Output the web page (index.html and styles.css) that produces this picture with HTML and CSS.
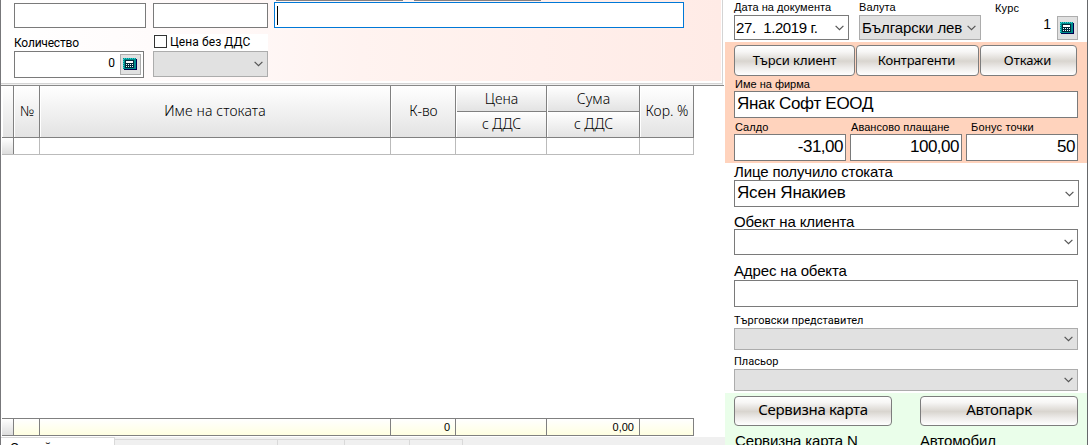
FILE: index.html
```html
<!DOCTYPE html>
<html lang="bg">
<head>
<meta charset="utf-8">
<title>Продажба</title>
<link rel="stylesheet" href="styles.css">
</head>
<body>
<svg class="defs" width="0" height="0">
  <symbol id="calc" viewBox="0 0 14 12" shape-rendering="crispEdges">
    <path fill="#000050" d="M1 1h13v11H1z"/>
    <path fill="#008c8c" d="M0 0h13v11H0z"/>
    <path fill="#30d8d8" d="M1 0h1v1H1zM3 0h1v1H3zM5 0h1v1H5zM7 0h1v1H7zM9 0h1v1H9zM11 0h1v1h-1zM0 1h1v1H0zM0 3h1v1H0zM0 5h1v1H0zM0 7h1v1H0zM0 9h1v1H0z"/>
    <path fill="#002838" d="M2 2h9v8H2z"/>
    <path fill="#fff" d="M3 3h7v2H3z"/>
    <path fill="#f0ffff" d="M3 6h1v1H3zM5 6h1v1H5zM7 6h1v1H7zM9 6h1v1H9zM3 8h1v1H3zM5 8h1v1H5zM7 8h1v1H7zM9 8h1v1H9z"/>
  </symbol>
  <symbol id="chev" viewBox="0 0 9 6"><path d="M.6.8l3.9 3.9L8.400.8" fill="none" stroke="#555" stroke-width="1.2"/></symbol>
</svg>
<div class="app">
  <main class="left">
    <section class="entry">
      <div class="cut"><i></i><i></i></div>
      <div class="row1">
        <div class="field f1"></div>
        <div class="field f2"></div>
        <div class="field active"><span class="caret"></span></div>
      </div>
      <div class="row2">
        <div class="qty">
          <label class="sys t-qty">Количество</label>
          <div class="field qfield"><span class="sys">0</span><button class="calc"><svg width="14" height="12"><use href="#calc"/></svg></button></div>
        </div>
        <div class="vat">
          <label class="check"><span class="box"></span><span class="sys t-vat">Цена без ДДС</span></label>
          <div class="field off vsel"><svg width="9" height="6"><use href="#chev"/></svg></div>
        </div>
      </div>
    </section>
    <section class="grid">
      <div class="line head">
        <div></div><div>№</div><div><span class="t-item">Име на стоката</span></div><div><span class="t-kvo">К-во</span></div>
        <div class="split"><span>Цена</span><span>с ДДС</span></div>
        <div class="split"><span>Сума</span><span>с ДДС</span></div>
        <div><span class="t-kor">Кор. %</span></div>
      </div>
      <div class="line blank"><div></div><div></div><div></div><div></div><div></div><div></div><div></div></div>
      <div class="space"></div>
      <div class="line foot"><div></div><div></div><div></div><div>0</div><div></div><div>0,00</div><div></div></div>
    </section>
    <nav class="tabs"><span class="on">Случай</span><span class="w2"></span><span class="w3"></span><span class="w4"></span><span class="w5"></span></nav>
  </main>
  <aside class="right">
    <section class="doc">
      <div class="date"><label class="s t-date">Дата на документа</label><div class="field"><span class="t-dv">27.&nbsp; 1.2019 г.</span><svg width="9" height="6"><use href="#chev"/></svg></div></div>
      <div class="cur"><label class="s t-val">Валута</label><div class="field off"><span class="t-bg">Български лев</span><svg width="9" height="6"><use href="#chev"/></svg></div></div>
      <div class="rate"><label class="s t-rate">Курс</label><div class="ratev"><span>1</span><button class="calc tall"><svg width="14" height="12"><use href="#calc"/></svg></button></div></div>
    </section>
    <section class="client">
      <div class="btns"><button class="btn"><span class="t-b1">Търси клиент</span></button><button class="btn"><span class="t-b2">Контрагенти</span></button><button class="btn"><span class="t-b3">Откажи</span></button></div>
      <label class="s t-firm">Име на фирма</label>
      <div class="field big"><span class="t-yan">Янак Софт ЕООД</span></div>
      <div class="sums">
        <div><label class="s">Салдо</label><div class="field big num">-31,00</div></div>
        <div><label class="s t-av">Авансово плащане</label><div class="field big num">100,00</div></div>
        <div><label class="s t-bon">Бонус точки</label><div class="field big num">50</div></div>
      </div>
    </section>
    <section class="place">
      <label class="m t-lice">Лице получило стоката</label>
      <div class="field big person"><span class="t-yas">Ясен Янакиев</span><svg width="9" height="6"><use href="#chev"/></svg></div>
      <label class="m m2 t-ob">Обект на клиента</label>
      <div class="field obj"><svg width="9" height="6"><use href="#chev"/></svg></div>
      <label class="m m3 t-adr">Адрес на обекта</label>
      <div class="field big"></div>
      <label class="sys l4 t-rep">Търговски представител</label>
      <div class="field off thin"><svg width="9" height="6"><use href="#chev"/></svg></div>
      <label class="sys l5 t-pl">Пласьор</label>
      <div class="field off thin"><svg width="9" height="6"><use href="#chev"/></svg></div>
    </section>
    <section class="service">
      <div><button class="btn wide"><span class="t-sk">Сервизна карта</span></button><label class="m t-skn">Сервизна карта N</label></div>
      <div><button class="btn wide"><span class="t-ap">Автопарк</span></button><label class="m t-am">Автомобил</label></div>
    </section>
  </aside>
</div>
</body>
</html>
```
FILE: styles.css
```css
* { box-sizing: border-box; }
body { margin: 0; width: 1088px; height: 445px; overflow: hidden; background: #fff; color: #000; font-family: "Liberation Sans", Arial, sans-serif; }
.defs { display: block; position: absolute; }
.app { display: flex; width: 1088px; height: 445px; overflow: hidden; border-left: 1px solid #77777a; border-right: 1px solid #66686b; }
label, span { white-space: nowrap; }
label { display: block; }
svg { display: block; flex: none; }
button { font: inherit; color: inherit; padding: 0; margin: 0; }
.field { border: 1px solid #7a7a7a; background: #fff; display: flex; align-items: center; }
.field.off { background: #e1e1e1; border-color: #acacac; }
.field > svg { margin-left: auto; }
.s { font-size: 11px; line-height: 13px; letter-spacing: .05px; }
.sys { font-family: Roboto, sans-serif; font-size: 12px; line-height: 14px; }
.m { font-size: 15px; line-height: 17px; letter-spacing: -.14px; }
.t-qty { letter-spacing: -.2px; }
.t-vat { letter-spacing: .08px; }
.t-firm { letter-spacing: 0; }
.t-bon { letter-spacing: .18px; }
.t-rate { letter-spacing: .2px; }

.left { width: 724px; display: flex; flex-direction: column; }
.entry { height: 85px; width: 722px; border-right: 1px solid #d4d4d4; border-bottom: 1px solid #f0f0f0; background: linear-gradient(90deg, #fff 0, #fffafa 190px, #fff3f0 360px, #ffebe6 720px) 0 0 / 720px 81px no-repeat, linear-gradient(#d4d4d4, #d4d4d4) 0 83px / 100% 1px no-repeat; padding-left: 13px; }
.cut { height: 2px; display: flex; gap: 11px; padding-left: 262px; }
.cut i { height: 1px; width: 127px; background: #858080; }
.row1 { display: flex; align-items: flex-start; height: 26px; }
.row1 .field { height: 25px; margin-top: 1px; }
.row1 .f1 { width: 132px; margin-right: 7px; }
.row1 .f2 { width: 115px; margin-right: 6px; }
.row1 .active { width: 410px; height: 26px; margin-top: 0; border-color: #0078d7; }
.caret { width: 1px; height: 19px; background: #000; margin-left: 2px; }
.row2 { display: flex; gap: 9px; }
.qty { width: 130px; padding-top: 8px; }
.qty label { height: 15px; }
.qfield { height: 27px; padding-right: 2px; justify-content: flex-end; gap: 5px; }
.qfield .sys { margin-top: -3px; }
.calc { width: 21px; height: 21px; border: 1px solid #adadad; background: #e1e1e1; display: flex; align-items: center; justify-content: center; }
.calc svg { margin: -1px 1px 0 0; }
.vat { width: 115px; padding-top: 6px; }
.check { height: 17px; background: #fff; display: flex; gap: 3px; padding: 1px 0 0 1px; }
.box { width: 13px; height: 13px; border: 1px solid #333; background: #fff; }
.vsel { height: 26px; padding-right: 4px; }

.grid { height: 351px; width: 723px; padding-left: 1px; border-top: 1px solid #888; display: flex; flex-direction: column; }
.line { display: grid; grid-template-columns: 12px 26px 351px 65px 91px 93px 54px; width: 692px; flex: none; }
.line > div { border-right: 1px solid #808080; display: flex; align-items: center; justify-content: center; }
.head { height: 52px; border-bottom: 1px solid #808080; font: 300 14px/16px "Noto Sans", sans-serif; }
.head > div { background: linear-gradient(#fff, #e3e3e3); border-left: 1px solid #fff; }
.t-item { letter-spacing: .12px; margin-left: -1px; }
.head > div:not(.split) { padding-bottom: 1px; }
.head .split { flex-direction: column; background: none; }
.split span { display: flex; align-items: center; justify-content: center; width: 100%; height: 26px; background: linear-gradient(#fff, #e3e3e3); }
.split span:first-child { height: 26px; border-bottom: 1px solid #808080; }
.split span:last-child { height: 25px; padding-bottom: 1px; letter-spacing: -.2px; }
.blank { height: 17px; border-bottom: 1px solid #bbb; }
.blank > div { border-right-color: #bbb; }
.blank > div:first-child, .foot > div:first-child { background: linear-gradient(#fff, #ddd); border-right-color: #808080; }
.space { flex: 1; }
.foot { height: 18px; border-top: 1px solid #808080; border-bottom: 1px solid #808080; font-size: 11px; }
.foot > div { background: linear-gradient(#fff, #ffffe1); justify-content: flex-end; padding-right: 5px; }
.tabs { margin-top: 1px; height: 8px; background: #f0f0f0; display: flex; align-items: flex-end; }
.tabs span { height: 6px; border-top: 1px solid #d9d9d9; border-right: 1px solid #d9d9d9; }
.tabs .on { width: 114px; height: 8px; background: #fff; font-size: 12px; line-height: 14px; padding: 3px 0 0 9px; overflow: hidden; }
.tabs .w2 { width: 163px; } .tabs .w3 { width: 67px; } .tabs .w4 { width: 65px; } .tabs .w5 { width: 53px; }

.right { width: 362px; display: flex; flex-direction: column; }
.doc { height: 42px; padding: 1px 0 0 9px; display: flex; }
.doc label { height: 14px; }
.doc .field { height: 25px; font-size: 15px; }
.date { width: 115px; margin-right: 10px; }
.date .field { padding: 0 4px 0 1px; }
.t-dv { letter-spacing: -.4px; }
.t-bg { letter-spacing: -.1px; }
.cur { width: 122px; }
.cur .field { padding: 0 4px 0 2px; }
.rate { width: 97px; padding-top: 1px; }
.rate label { padding-left: 14px; }
.ratev { display: flex; justify-content: flex-end; gap: 6px; font-size: 14px; line-height: 16px; }
.calc.tall { height: 24px; }
.client { height: 121px; background: #ffd3bd; padding: 3px 0 0 9px; }
.btns { display: grid; grid-template-columns: 121px 123px 97px; gap: 1px; height: 33px; }
.btn { height: 31px; border: 1px solid #7d7d7d; border-radius: 4px; background: linear-gradient(#fff 0, #f7f6f5 20%, #d9d5cf 52%, #eeecea 75%, #fff 100%); font: 13px/18px "Noto Sans", sans-serif; text-align: center; padding-bottom: 2px; }
.t-b2 { letter-spacing: -.2px; margin-right: 2px; }
.t-b1 { letter-spacing: -.1px; }
.t-b3 { margin-right: 2px; }
.client > .s { height: 13px; padding-left: 1px; }
.big { height: 27px; width: 344px; font-size: 17px; padding: 0 2px 1px; }
.t-yan { letter-spacing: -.28px; }
.t-yas { letter-spacing: -.2px; }
.sums { display: flex; gap: 4px; padding-top: 3px; }
.sums label { height: 13px; padding-left: 1px; }
.sums > div:last-child label { padding-left: 5px; }
.sums .big { width: 112px; justify-content: flex-end; letter-spacing: -.5px; padding-bottom: 2px; }
.place { height: 230px; padding: 1px 0 0 9px; }
.place > label { height: 16px; }
.place > .t-lice { line-height: 15px; }
.place .field { width: 344px; padding-right: 4px; }
.place .person { width: 345px; padding-bottom: 2px; }
.place .person svg { margin-top: 2px; }
.place .person, .place .person ~ .none { padding-left: 2px; }
.place .m2 { margin-top: 7px; height: 15px; line-height: 15px; }
.place .obj { height: 26px; }
.place .m3 { margin-top: 8px; height: 17px; line-height: 16px; }
.place .l4 { margin-top: 7px; height: 14px; line-height: 13px; font-size: 11px; letter-spacing: .02px; }
.place .l5 { margin-top: 5px; height: 14px; line-height: 13px; font-size: 11px; }
.place .thin { height: 22px; }
.service { height: 52px; background: #eafeea; display: flex; gap: 28px; padding: 3px 0 0 9px; }
.service > div { width: 158px; }
.btn.wide { width: 158px; height: 30px; font-size: 15px; letter-spacing: -.3px; display: block; padding-bottom: 4px; }
.service label { margin-top: 6px; }
.t-skn { padding-left: 1px; }
```
